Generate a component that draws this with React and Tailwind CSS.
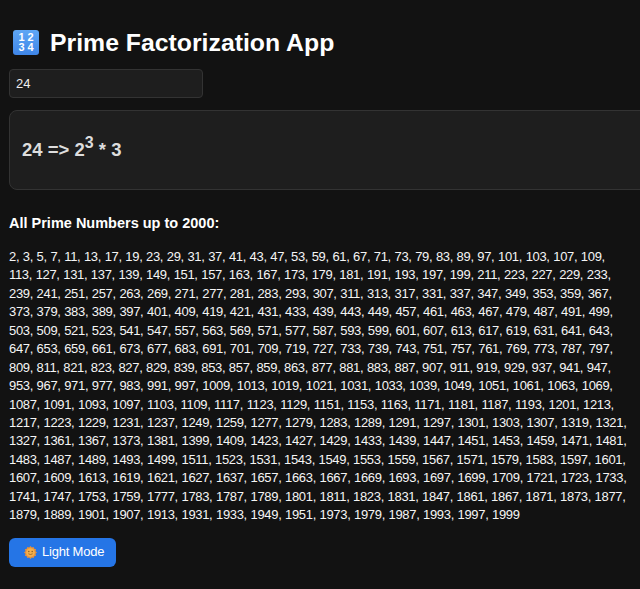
import { useState } from "react";

// all primes up to the limit, simple sieve
function getPrimes(limit) {
    const primes = [];
    for (let n = 2; n <= limit; n++) {
        let isPrime = true;
        for (let d = 2; d * d <= n; d++) {
            if (n % d === 0) {
                isPrime = false;
                break;
            }
        }
        if (isPrime) primes.push(n);
    }
    return primes;
}

function NumbersIcon() {
    return (
        <span className="w-[26px] h-[25px] -mt-[2px] shrink-0 rounded-[3px] bg-gradient-to-b from-[#5ea6f5] to-[#3f86e8] grid grid-cols-2 place-items-center px-[4px] py-[2px] text-white font-bold text-[11px] leading-[10px]">
            <span>1</span>
            <span>2</span>
            <span>3</span>
            <span>4</span>
        </span>
    );
}

function SunIcon() {
    return (
        <svg width="13" height="13" viewBox="0 0 14 14" className="shrink-0">
            <path
                d="M7 0 L8.4 1.6 L10.4 1 L11 3 L13 3.6 L12.4 5.6 L14 7 L12.4 8.4 L13 10.4 L11 11 L10.4 13 L8.4 12.4 L7 14 L5.6 12.4 L3.6 13 L3 11 L1 10.4 L1.6 8.4 L0 7 L1.6 5.6 L1 3.6 L3 3 L3.6 1 L5.6 1.6 Z"
                fill="#e8923a"
            />
            <circle cx="7" cy="7" r="4.6" fill="#f4b04c" />
            <circle cx="5.2" cy="6" r="0.8" fill="#8a5a20" />
            <circle cx="8.8" cy="6" r="0.8" fill="#8a5a20" />
            <path d="M4.7 8.4 Q7 10 9.3 8.4" stroke="#8a5a20" strokeWidth="0.8" fill="none" />
        </svg>
    );
}

export default function App() {
    const [value, setValue] = useState("24");
    const primes = getPrimes(2000);

    return (
        <div className="min-h-screen h-[589px] overflow-hidden bg-[#121212] text-white font-['Liberation_Sans',Arial,sans-serif] px-[9px]">
            <h1 className="flex items-center gap-[11px] pl-[4px] pt-[30px] text-[24.8px] leading-[26px] font-bold">
                <NumbersIcon />
                Prime Factorization App
            </h1>

            <input
                value={value}
                onChange={(e) => setValue(e.target.value)}
                className="block mt-[13px] w-[194px] h-[29px] px-[6px] bg-[#1e1e1e] border border-[#333] rounded-[4px] text-[13px] text-[#eee] outline-none"
            />

            {/* result card runs off the right edge */}
            <div className="mt-[12px] w-[700px] h-[80px] flex items-center pl-[12px] bg-[#1e1e1e] border border-[#333] rounded-[8px] text-[#ddd] text-[18.5px] font-bold">
                <span>
                    24 =&gt; 2<sup className="text-[16px] font-bold top-[-8px]">3</sup> * 3
                </span>
            </div>

            <h3 className="mt-[24px] text-[14.5px] leading-[18px] font-bold">All Prime Numbers up to 2000:</h3>

            <p className="mt-[16px] text-[13px] leading-[18.43px] tracking-[-0.33px] [word-spacing:0.34px] text-[#f5f5f5]">{primes.join(", ")}</p>

            <button className="mt-[13px] h-[29px] w-[107px] flex items-center gap-[5px] pl-[15px] bg-[#2575e6] rounded-[6px] text-[13px] tracking-[-0.2px] text-white">
                <SunIcon />
                Light Mode
            </button>
        </div>
    );
}
